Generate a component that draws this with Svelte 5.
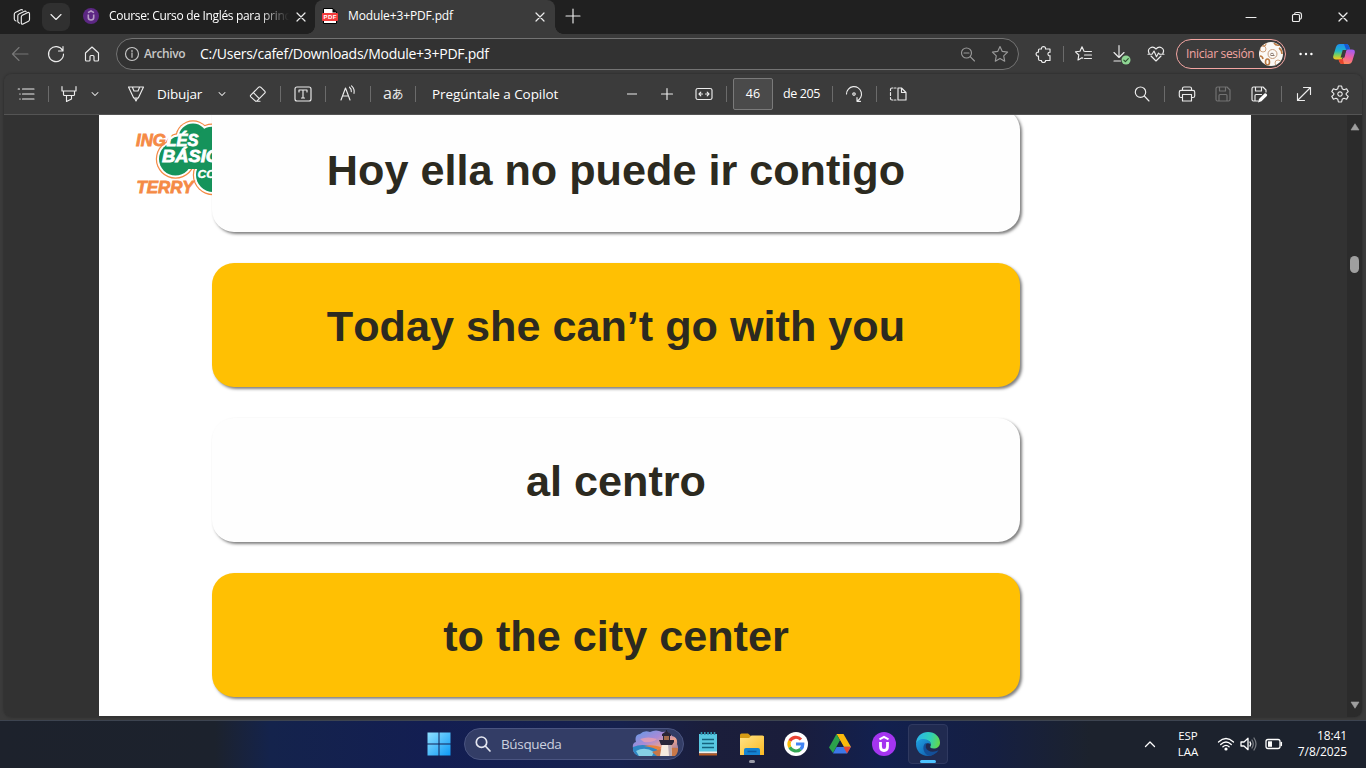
<script>
  const paths = {
    tabs: 'M9.300 10 Q9.300 8.800 10.300 8.300 L15.800 5.600 Q17.500 5 17.500 6.800 V12.500 Q17.500 13.700 16.500 14.200 L11 17 Q9.300 17.600 9.300 16Z M7.500 16.200 Q5.800 15.700 5.800 14.300 V8.800 Q5.800 7.500 7 7 L12.500 4.300 Q13.700 3.900 14 4.600 M4 14 Q2.300 13.500 2.300 12 V7.200 Q2.300 6 3.300 5.500 L8.800 2.800 Q10.100 2.300 10.500 3',
    chevron: 'M5 7.5 L10 12.5 L15 7.5',
    chevronUp: 'M5.500 12.5 L10 8 L14.500 12.5',
    close: 'M6 6 L14 14 M14 6 L6 14',
    plus: 'M10 3 V17 M3 10 H17',
    zoomIn: 'M10 4.5 V15.5 M4.5 10 H15.5',
    minus: 'M5 10 H15',
    minimize: 'M5 10.5 H15',
    restore: 'M5.5 8.500 Q5.5 7.500 6.5 7.500 H11.5 Q12.5 7.500 12.5 8.500 V13.5 Q12.5 14.5 11.5 14.5 H6.5 Q5.5 14.5 5.5 13.5Z M7.5 7.300 Q7.6 5.500 9.5 5.500 H12 Q14.5 5.500 14.5 8 V10 Q14.5 12 13 12.2',
    back: 'M18 10 H2.5 M9 3.5 L2.5 10 L9 16.5',
    refresh: 'M16.6 6.5 A7.5 7.5 0 1 0 17.5 10 M17 2.5 V7 H12.5',
    home: 'M3.5 9 L10 3 L16.5 9 V16 Q16.5 17 15.5 17 H13 Q12 17 12 16 V12.5 Q12 11.5 11 11.5 H9 Q8 11.5 8 12.5 V16 Q8 17 7 17 H4.5 Q3.5 17 3.5 16Z',
    info: 'M10 3.5 A6.5 6.5 0 1 0 10 16.5 A6.5 6.5 0 1 0 10 3.5 M10 9 V13.3 M10 6.3 V7.7',
    zoomOut: 'M8.500 4 A5 5 0 1 0 8.500 14 A5 5 0 1 0 8.500 4 M12.200 12.7 L16.500 17 M6 9 H11',
    star: 'M10 2.5 L12.3 7.4 L17.6 8.1 L13.7 11.8 L14.7 17.2 L10 14.6 L5.3 17.2 L6.3 11.8 L2.4 8.1 L7.7 7.4Z',
    puzzle: 'M5.500 5 H7.500 C6.900 1.8 12.100 1.8 11.500 5 H16 V8.3 C13.300 7.8 13.300 12.2 16 11.7 V16.5 H11.500 C12.100 19.200 6.900 19.200 7.500 16.5 H6 Q4.500 16.5 4.500 15 V12 C1.300 12.6 1.300 7.6 4.500 8.2 V6 Q4.500 5 5.500 5Z',
    favorites: 'M11.5 7.5 L10 7.3 L8 2.8 L6 7.2 L1.5 7.8 L4.8 11 L4 16 L8 13.7 L8.8 14.2 M11.5 7.5 H17.5 M10.5 11 H17.5 M10.5 14.5 H17.5',
    download: 'M8 1.5 V13.5 M3 8.5 L8 13.5 L13 8.5 M3 17 H9.5',
    heart: 'M3.2 9.5 C0.5 4.5 6.5 1 10 5 C13.5 1 19.5 4.5 16.8 9.5 M5 12 L10 17 L15 12 M2 10.2 H6 L8 7 L10.5 12.7 L12.5 9 L13.5 10.2 H18',
    list: 'M6.500 5 H18 M6.500 10 H18 M6.500 15 H18 M2.2 5 H3.5 M3.800 10 H4.200 M3.800 15 H4.200',
    highlighter: 'M3 2.500 V7 H17 V2.500 M4.500 7 V10.500 Q4.500 11.500 5.500 11.500 H14.500 Q15.500 11.500 15.500 10.500 V7 M7.5 11.5 V17.5 L12.5 15 V11.5',
    pen: 'M2.5 3 H17.5 L12.3 14 H7.7Z M6.300 3 L8 7 H12 L13.700 3 M8.5 14 L10 17 L11.5 14',
    eraser: 'M2.8 11.2 L10.7 3.2 Q11.7 2.3 12.7 3.2 L16.7 7.2 Q17.7 8.2 16.7 9.2 L8.8 17.2 H7.5 L2.8 12.8 Q2 12 2.8 11.2Z M5.4 8.7 L11.3 14.6 M7.5 17.2 H12',
    textBox: 'M4 3 H16 Q18 3 18 5 V15 Q18 17 16 17 H4 Q2 17 2 15 V5 Q2 3 4 3Z M6 8 V6 H14 V8 M10 6 V14 M8.5 14 H11.5',
    readAloud: 'M3 16 L7.500 4 L12 16 M4.500 12 H10.500 M11.500 3.2 Q13.700 5 13.300 7.7 M13.500 1.8 Q17 5 16 9.3',
    fit: 'M4 4.5 H16 Q18 4.5 18 6 V14 Q18 15.5 16 15.5 H4 Q2 15.5 2 14 V6 Q2 4.5 4 4.5Z M5 10 H8.500 M6.800 8.200 L5 10 L6.800 11.800 M11.500 10 H15 M13.200 8.200 L15 10 L13.200 11.800',
    rotate: 'M2.5 10 A7.5 7.5 0 1 1 13 17 M13 13.5 V17.3 H16.5 M10 8.8 A1.2 1.2 0 1 0 10 11.2 A1.2 1.2 0 1 0 10 8.8',
    pageView: 'M10 4 H13.5 L18 8.5 V16 H10Z M13.5 4 V8.5 H18 M8 4 H6.5 M5 4 H4 Q2.5 4 2.5 5.5 V6.5 M2.5 8.5 V11.5 M2.5 13.5 V14.5 Q2.5 16 4 16 H5 M6.5 16 H8',
    search: 'M8.5 3 A5.2 5.2 0 1 0 8.5 13.4 A5.2 5.2 0 1 0 8.5 3 M12.3 12 L17 17',
    print: 'M5.5 6 V4.5 Q5.5 3 7 3 H13 Q14.5 3 14.5 4.5 V6 M5.5 13.5 H4 Q2.3 13.5 2.3 12 V8 Q2.3 6.3 4 6.3 H16 Q17.7 6.3 17.7 8 V12 Q17.7 13.5 16 13.5 H14.5 M5.5 10.5 H14.5 V17 H5.5Z',
    save: 'M4.5 3 H14 L17 6 V15.5 Q17 17 15.5 17 H4.5 Q3 17 3 15.5 V4.5 Q3 3 4.5 3Z M6.5 3.3 V7 H12.5 V3.3 M6 17 V11.5 Q6 10.5 7 10.5 H13 Q14 10.5 14 11.5 V17',
    saveAs: 'M9 17 H4.5 Q3 17 3 15.5 V4.5 Q3 3 4.5 3 H14 L17 6 V8 M6.5 3.3 V7 H12.5 V3.3 M6 17 V11.5 Q6 10.5 7 10.5 H12.5',
    expand: 'M3.5 16.5 L16.5 3.5 M9.5 3.5 H16.5 V10.5 M3.5 9.5 V16.5 H10.5',
    gear: 'M8.4 2 H11.6 L12.2 4.7 L14 5.7 L16.6 4.8 L18.2 7.6 L16.2 9.4 V10.6 L18.2 12.4 L16.6 15.2 L14 14.3 L12.2 15.3 L11.6 18 H8.4 L7.8 15.3 L6 14.3 L3.4 15.2 L1.8 12.4 L3.8 10.6 V9.4 L1.8 7.6 L3.4 4.8 L6 5.7 L7.8 4.7Z M10 7.8 A2.2 2.2 0 1 0 10 12.2 A2.2 2.2 0 1 0 10 7.8',
  };

  const cards = [
    { text: 'Hoy ella no puede ir contigo', yellow: false },
    { text: 'Today she can’t go with you', yellow: true },
    { text: 'al centro', yellow: false },
    { text: 'to the city center', yellow: true },
  ];
</script>

{#snippet icon(name, cls = '')}
  <svg class="icon {cls}" viewBox="0 0 20 20"><path d={paths[name]} /></svg>
{/snippet}

{#snippet cloud(fill, grow)}
  <g {fill}>
    <circle cx="59" cy="20" r={14.5 + grow} />
    <circle cx="78" cy="24" r={15.3 + grow} />
    <circle cx="44" cy="28" r={9.5 + grow} />
    <circle cx="41.5" cy="41" r={16.5 + grow} />
    <circle cx="79" cy="57" r={17 + grow} />
  </g>
{/snippet}

<div class="screen">
  <header class="tabstrip">
    {@render icon('tabs', 'tabs-icon')}
    <div class="tabmenu">{@render icon('chevron')}</div>
    <div class="tab idle">
      <svg class="fav" viewBox="0 0 16 16"><circle cx="8" cy="8" r="8" fill="#5c2783" /><path d="M5.3 6.5 V9.5 Q5.3 12 8 12 Q10.7 12 10.7 9.5 V6.5 M5 4.6 L8 3 L11 4.6" fill="none" stroke="#b59cc6" stroke-width="1.6" /></svg>
      <span class="tabtitle fade">Course: Curso de Inglés para princ</span>
      {@render icon('close')}
    </div>
    <div class="tab active">
      <svg class="fav" viewBox="0 0 16 16"><path d="M1.5 .5 H11 L14.5 4 V15.5 H1.5Z" fill="#fff" stroke="#000" /><path d="M10.5 0 L15 4.5 H10.5Z" fill="#000" /><rect y="5" width="16" height="8" rx="1" fill="#f33b3b" /><text x="1.5" y="11.2" textLength="13" font-size="6" font-weight="700" fill="#fff">PDF</text></svg>
      <span class="tabtitle">Module+3+PDF.pdf</span>
      {@render icon('close')}
    </div>
    {@render icon('plus', 'newtab')}
    <div class="window-controls">
      {@render icon('minimize')}
      {@render icon('restore')}
      {@render icon('close', 'win-close')}
    </div>
  </header>

  <nav class="address-row">
    {@render icon('back', 'dim')}
    {@render icon('refresh')}
    {@render icon('home')}
    <div class="omnibox">
      {@render icon('info', 'soft')}
      <span class="scheme">Archivo</span>
      <span class="url">C:/Users/cafef/Downloads/Module+3+PDF.pdf</span>
      {@render icon('zoomOut', 'grey')}
      {@render icon('star', 'grey')}
    </div>
    <div class="extras">
      {@render icon('puzzle')}
      <i class="sep"></i>
      {@render icon('favorites')}
      <svg class="icon download" viewBox="0 0 20 20"><path d={paths.download} /><circle cx="15" cy="16" r="4.5" class="badge" /><path d="M12.800 16.1 L14.4 17.7 L17.3 14.7" class="check" /></svg>
      {@render icon('heart')}
    </div>
    <div class="signin">
      <span>Iniciar sesión</span>
      <svg class="avatar" viewBox="0 0 24 24">
        <clipPath id="face"><circle cx="12" cy="12" r="12" /></clipPath>
        <g clip-path="url(#face)" fill="none" stroke="#b9773f">
          <rect width="24" height="24" fill="#fbf8f5" stroke="none" />
          <circle cx="13.5" cy="12" r="4.5" stroke="#c39a7b" />
          <path d="M11 12.5 L13 11 L15 12.5 M11.5 13.5 H15.5" stroke="#8b7a70" />
          <circle cx="4" cy="7" r="3" stroke="#cfa27e" /><circle cx="5" cy="2" r="2" />
          <ellipse cx="8.5" cy="20" rx="2" ry="3" stroke-width="1.6" />
          <circle cx="19" cy="21" r="3" stroke="#cfa27e" /><path d="M20 6 Q23 8 23 12 M15 1 Q17 4 21 3 M1 14 Q3.5 14 4 17" stroke-width="1.6" />
        </g>
      </svg>
    </div>
    <svg class="icon dots" viewBox="0 0 20 20"><g class="fillw"><circle cx="4.6" cy="10" r="1.2" /><circle cx="10" cy="10" r="1.2" /><circle cx="15.4" cy="10" r="1.2" /></g></svg>
    <svg class="copilot" viewBox="0 0 22 20">
      <defs>
        <linearGradient id="cpA" x1="0" y1="0" x2="0" y2="1"><stop offset="0" stop-color="#1f8fef" /><stop offset=".45" stop-color="#1fb5c8" /><stop offset=".7" stop-color="#7ccf5b" /><stop offset="1" stop-color="#ffc61a" /></linearGradient>
        <linearGradient id="cpB" x1=".6" y1="0" x2=".3" y2="1"><stop offset="0" stop-color="#a45cf0" /><stop offset=".5" stop-color="#f0609e" /><stop offset="1" stop-color="#ff9152" /></linearGradient>
      </defs>
      <path d="M7 0 H13 Q15.5 0 16.3 3 L17 5.5 H14 Q12 5.5 11.3 8 L9.5 14 Q8.8 15.5 7 15.5 H3 Q-.7 15.5 .4 11.5 L3 3 Q4 0 7 0Z" fill="url(#cpA)" />
      <path d="M11 0 H13 Q15.5 0 16.3 3 L17 5.5 H13 Q12 3 11 0Z" fill="#1559d6" />
      <path d="M15 5.5 H19 Q22.7 5.5 21.6 9.5 L19.3 17 Q18.4 20 15.4 20 H9.5 Q7 20 6.2 17.5 L5.6 15.5 H8 Q10 15.5 10.6 13.5 L12.7 7.5 Q13.4 5.5 15 5.5Z" fill="url(#cpB)" />
      <path d="M9.700 6 H13.300 L11.500 13.500 H7.600Z" fill="#3b3b3b" />
      <path d="M5.6 15.5 H8 Q9 15.5 9.8 14.8 L11 20 H9.5 Q7 20 6.2 17.5Z" fill="#e8452c" />
    </svg>
  </nav>

  <main class="panel">
    <div class="toolbar">
      {@render icon('list')}
      <i class="sep"></i>
      {@render icon('highlighter', 'near')}
      {@render icon('chevron', 'mini')}
      {@render icon('pen', 'draw')}
      <span class="label w-draw">Dibujar</span>
      {@render icon('chevron', 'mini')}
      {@render icon('eraser', 'eraser')}
      <i class="sep"></i>
      {@render icon('textBox')}
      <i class="sep"></i>
      {@render icon('readAloud')}
      <i class="sep"></i>
      <span class="translate">a<b>あ</b></span>
      <i class="sep"></i>
      <span class="label w-copilot">Pregúntale a Copilot</span>
      {@render icon('minus', 'zoomer')}
      {@render icon('zoomIn', 'plus15')}
      {@render icon('fit', 'plus17')}
      <i class="sep"></i>
      <span class="pagebox">46</span>
      <span class="label w-total">de 205</span>
      <i class="sep"></i>
      {@render icon('rotate', 'tight')}
      <i class="sep"></i>
      {@render icon('pageView', 'tight')}
      <div class="tools-right">
        {@render icon('search')}
        <i class="sep"></i>
        {@render icon('print')}
        {@render icon('save', 'faded wide')}
        <svg class="icon wide" viewBox="0 0 20 20"><path d={paths.saveAs} /><path d="M9 18.5 L10 15 L15.5 9.5 Q16.5 8.8 17.6 9.9 Q18.7 11 17.8 12 L12.5 17.3Z" class="fillw" /></svg>
        <i class="sep"></i>
        {@render icon('expand')}
        {@render icon('gear', 'wide')}
      </div>
    </div>

    <div class="viewer">
      <article class="page">
        <svg class="logo" viewBox="0 0 80 82">
          {@render cloud('#f58a45', 3.2)}
          {@render cloud('#fff', 2)}
          {@render cloud('#15935b', 0)}
          <rect x="46" y="24" width="34" height="27" fill="#15935b" />
          <g class="logotext">
            <text x="2" y="28" textLength="30" lengthAdjust="spacingAndGlyphs" fill="#f58a45" stroke="#f58a45">ING</text>
            <text x="32.500" y="28" textLength="32" lengthAdjust="spacingAndGlyphs" fill="#fff" stroke="#fff">LÉS</text>
            <text x="28" y="44.300" textLength="57" lengthAdjust="spacingAndGlyphs" fill="#fff" stroke="#fff">BÁSIC</text>
            <text x="63.500" y="60" textLength="18" lengthAdjust="spacingAndGlyphs" class="small" fill="#fff" stroke="#fff">CO</text>
            <text x="2.500" y="75" textLength="57" lengthAdjust="spacingAndGlyphs" fill="#f58a45" stroke="#f58a45">TERRY</text>
          </g>
        </svg>
        <div class="cards">
          {#each cards as card}
            <div class="card" class:yellow={card.yellow}>{card.text}</div>
          {/each}
        </div>
      </article>
      <aside class="scrollbar">
        <svg viewBox="0 0 10 8"><path d="M5 .7 L9 7 H1Z" /></svg>
        <span class="thumb"></span>
        <svg viewBox="0 0 10 8"><path d="M1 1 H9 L5 7.300Z" /></svg>
      </aside>
    </div>
  </main>

  <footer class="taskbar">
    <div class="tile">
      <svg width="24" height="24" viewBox="0 0 24 24"><defs><linearGradient id="win" x1="0" y1="0" x2="1" y2="1"><stop offset="0" stop-color="#8fe0ff" /><stop offset="1" stop-color="#0d99f5" /></linearGradient></defs><path d="M.5 .5 H11.500 V11.500 H.5Z M12.500 .5 H23.500 V11.500 H12.500Z M.5 12.500 H11.500 V23.500 H.5Z M12.500 12.500 H23.500 V23.500 H12.500Z" fill="url(#win)" /></svg>
    </div>
    <div class="searchbox">
      {@render icon('search', 'glass')}
      <span>Búsqueda</span>
      <svg class="lighthouse" viewBox="0 0 47 27">
        <defs><linearGradient id="sky" x1="0" y1="0" x2="1" y2="1"><stop offset="0" stop-color="#5a9be8" /><stop offset=".4" stop-color="#a98ad6" /><stop offset=".65" stop-color="#f0a48c" /><stop offset="1" stop-color="#6f6bb0" /></linearGradient></defs>
        <path d="M1 18 Q0 13 4 12 Q2 5 8 4 Q12 0 18 2 Q24 -1 30 2 Q37 1 40 6 Q46 7 45 14 Q48 20 43 25 H6 Q1 24 1 18Z" fill="url(#sky)" />
        <path d="M8 9 Q16 6 25 9 Q20 13 12 12Z" fill="#f3a0a8" opacity=".7" />
        <path d="M1 17 Q12 12 25 19 L30 26 H6 Q0 23 1 17Z" fill="#2e86c4" /><path d="M4 21 Q13 16 22 22 L20 26 H7Z" fill="#86cfe4" />
        <path d="M12 16 Q20 14 29 17 L28 21 Q21 17 12 16Z" fill="#e8823e" /><path d="M20 22 Q34 17 46 18 Q46 24 43 26 H25Z" fill="#c97848" />
        <path d="M30 14 H39 L40 26 H28Z" fill="#f5eadf" /><path d="M36 14 H39 L40 26 H37Z" fill="#b9aab4" />
        <path d="M27 10 H42 V12 L40 15 H29Z M30 4 L34.500 1 L39 4 V6 H30Z M31 6 H32 V10 H31Z M37 6 H38 V10 H37Z M34 0 H35 V2 H34Z" fill="#292538" /><rect x="32" y="6" width="5" height="4" fill="#a06a4c" />
      </svg>
    </div>
    <div class="tile">
      <svg width="20" height="24" viewBox="0 0 20 24"><rect x="1" y="2" width="18" height="18" fill="#58c8e2" /><path d="M3.500 0 V3 M6.800 0 V3 M10 0 V3 M13.200 0 V3 M16.500 0 V3" stroke="#3198b4" stroke-width="1.600" /><path d="M4 7.500 H16 M4 11.500 H16 M4 15.500 H16" stroke="#14637e" stroke-width="1.700" /><rect x="1" y="19.500" width="18" height="2" fill="#f2eee9" /><rect x="1" y="21.500" width="18" height="2" fill="#b65a22" /></svg>
    </div>
    <div class="tile">
      <svg width="24" height="24" viewBox="0 0 24 24"><defs><linearGradient id="fold" x1="0" y1="0" x2="1" y2="1"><stop offset="0" stop-color="#ffe488" /><stop offset="1" stop-color="#fcb922" /></linearGradient></defs><path d="M0 3 Q0 1.500 1.500 1.500 H8 L11 4 H24 V10 H0Z" fill="#d59b14" /><path d="M0 6 H9 L11.500 3.500 H22.500 Q24 3.500 24 5 V23 H0Z" fill="url(#fold)" /><path d="M4 23 V18 Q4 16 6 16 H18 Q20 16 20 18 V23Z" fill="#1583d1" /><path d="M7.500 19.500 H16.500" stroke="#0c5ba2" stroke-width="1.600" /></svg>
      <i class="running"></i>
    </div>
    <div class="tile">
      <svg width="24" height="24" viewBox="0 0 24 24"><circle cx="12" cy="12" r="12" fill="#fff" /><g fill="none" stroke-width="3.200"><path d="M17 7.500 A7 7 0 0 0 5.700 9" stroke="#ea4335" /><path d="M5.700 9 A7 7 0 0 0 5.800 15.300" stroke="#fbbc04" /><path d="M5.800 15.300 A7 7 0 0 0 16.600 17.200" stroke="#34a853" /><path d="M16.600 17.200 Q19 15 18.800 12 H12" stroke="#4285f4" /></g></svg>
    </div>
    <div class="tile">
      <svg width="24" height="24" viewBox="0 0 24 24"><path d="M8.500 2 H15.500 L23 15 H16Z" fill="#fbb90b" /><path d="M8.500 2 L12 8.500 L5 21 L1 15.500Z" fill="#2ba24c" /><path d="M5 21.500 L8.700 14.800 H23 L19 21.500Z" fill="#3c78e8" /><path d="M19 21.500 L15.300 14.800 H23Z" fill="#e54335" /><path d="M12 8.500 L15.500 15 H8.500Z" fill="#181f40" /></svg>
    </div>
    <div class="tile">
      <svg width="24" height="24" viewBox="0 0 24 24"><circle cx="12" cy="12" r="12" fill="#a435f0" /><path d="M8.500 10 V14.500 Q8.500 18.500 12 18.500 Q15.500 18.500 15.500 14.500 V10" fill="none" stroke="#fff" stroke-width="2.800" /><path d="M7.500 7.300 L12 4.800 L16.500 7.300" fill="none" stroke="#fff" stroke-width="2" /></svg>
    </div>
    <div class="tile current">
      <svg width="24" height="24" viewBox="0 0 24 24">
        <defs><linearGradient id="eg1" x1="0" y1=".3" x2="1" y2=".5"><stop offset="0" stop-color="#2bb3ee" /><stop offset=".6" stop-color="#2fd0b5" /><stop offset="1" stop-color="#62d94c" /></linearGradient><linearGradient id="eg2" x1="0" y1="0" x2="1" y2="1"><stop offset="0" stop-color="#1fa0e2" /><stop offset="1" stop-color="#0f55a5" /></linearGradient></defs>
        <path d="M0 12 C0 4 6 0 12 0 C19 0 24 5 24 10.500 C24 14.500 21 16.500 17.700 16.500 C15 16.500 14 15.500 14.300 14.500 C15.600 13 15 9 10 8 C5 7.500 1 9 0 12Z" fill="url(#eg1)" />
        <path d="M0 12 C1 8 5.500 6.500 9 7.300 C13.500 8 15 11 14.800 12.500 C12 9.500 8 12 8.500 16 C9 20 14 22.500 20 20 C18 22.500 15 24 12 24 C5 24 0 19 0 12Z" fill="url(#eg2)" />
        <path d="M9 11.500 C5.500 15 8 23 13.500 23.900 C17 23.500 20.500 21.500 22.600 18.300 C17 21 11 19.500 9.800 15.500 Q9.300 13 11 11Z" fill="#134f98" />
      </svg>
      <i class="running"></i>
    </div>
    <div class="tray">
      {@render icon('chevronUp', 'up')}
      <div class="lang"><span>ESP</span><span>LAA</span></div>
      <svg class="icon wifi" viewBox="0 0 20 20"><path d="M2.500 8 Q10 1 17.500 8 M4.700 10.500 Q10 5.500 15.300 10.500 M6.900 12.800 Q10 10 13.100 12.800" /><circle cx="10" cy="15" r="1.600" class="fillw" /></svg>
      <svg class="icon vol" viewBox="0 0 20 20"><path d="M3 8 H6 L10 4.300 V15.700 L6 12 H3Z M12 8 Q13.500 10 12 12" /><path d="M14 6 Q16.500 10 14 14 M16 4 Q20 10 16 16" stroke-opacity=".4" /></svg>
      <svg class="icon batt" viewBox="0 0 20 20"><path d="M4 5.500 H14 Q16 5.500 16 7.500 V12.500 Q16 14.500 14 14.500 H4 Q2 14.500 2 12.500 V7.500 Q2 5.500 4 5.500Z" /><path d="M17.300 8.500 V11.500" stroke-width="1.500" /><rect x="4" y="7.300" width="4" height="5.500" class="fillw" /></svg>
      <div class="clock"><span>18:41</span><span>7/8/2025</span></div>
    </div>
  </footer>
</div>

<style>
  :global(body) { margin: 0; overflow: hidden; }
  .screen {
    width: 1366px; height: 768px; display: flex; flex-direction: column;
    background: #3b3b3b; color: #fff; overflow: hidden;
    font: 12px/16px "Open Sans", "Noto Sans", sans-serif;
  }
  svg { display: block; flex: none; }
  span { white-space: nowrap; }
  .icon { width: 20px; height: 20px; fill: none; stroke: #ececec; stroke-width: 1.15; stroke-linejoin: round; stroke-linecap: round; }
  .sep { width: 1px; height: 16px; background: #6b6b6b; flex: none; }

  .tabstrip { height: 34px; flex: none; display: flex; align-items: center; background: #202020; }
  .tabs-icon { margin: 0 10px 0 12px; }
  .tabmenu { width: 28px; height: 28px; border-radius: 8px; background: #303030; display: grid; place-items: center; }
  .tab { box-sizing: border-box; display: flex; align-items: center; height: 34px; padding-bottom: 2px; }
  .idle { width: 245px; padding-left: 13px; }
  .active {
    width: 240px; padding-left: 7px; background: #3b3b3b; border-radius: 8px 8px 0 0; position: relative;
  }
  .active::before, .active::after { content: ""; position: absolute; bottom: 0; width: 8px; height: 8px; }
  .active::before { left: -8px; background: radial-gradient(circle at 0 0, transparent 7.5px, #3b3b3b 8px); }
  .active::after { right: -8px; background: radial-gradient(circle at 100% 0, transparent 7.5px, #3b3b3b 8px); }
  .fav { width: 16px; height: 16px; font-family: "Liberation Sans", sans-serif; }
  .tabtitle { margin-left: 10px; width: 181px; overflow: hidden; letter-spacing: -.13px; }
  .idle .tabtitle { letter-spacing: -.32px; }
  .tab .icon { margin: 2px 0 0 1px; stroke-width: 1.2; }
  .fade { mask-image: linear-gradient(90deg, #000 150px, transparent 180px); }
  .newtab { margin-left: 8px; margin-bottom: 2px; }
  .window-controls { margin-left: auto; display: flex; gap: 26px; padding-right: 12px; }
  .win-close { stroke-width: 1.3; width: 22px; margin-left: -1px; }

  .address-row { height: 40px; flex: none; display: flex; align-items: center; padding-left: 10px; gap: 16px; }
  .dim { stroke: #777; }
  .soft { stroke: #c8c8c8; }
  .grey { stroke: #999; }
  .omnibox {
    box-sizing: border-box; width: 903px; height: 32px; margin-left: -2px; padding: 0 8px 0 5px;
    border: 1px solid #737373; border-radius: 16px; background: #323232; display: flex; align-items: center;
  }
  .scheme { margin-left: 2px; width: 56px; font-weight: 600; color: #c8c8c8; letter-spacing: -.35px; }
  .url { flex: 1; font-size: 14px; letter-spacing: -.27px; }
  .omnibox .icon:last-child { margin-left: 12px; }
  .extras { display: flex; align-items: center; gap: 16px; margin-left: -1px; }
  .extras .sep { margin: 0 -6px 0 -7px; }
  .extras .download { margin: 0 -1px 0 1px; overflow: visible; }
  .badge { fill: #8fd694; stroke: none; }
  .check { stroke: #2c4f2e; }
  .signin {
    box-sizing: border-box; width: 110px; height: 30px; border: 1px solid #f3a5a2; border-radius: 15px;
    display: flex; align-items: center; justify-content: space-between; padding: 0 2px 0 9px; color: #f3a5a2; margin-left: -6px;
  }
  .signin span { letter-spacing: -.33px; }
  .avatar { width: 24px; height: 24px; }
  .dots { margin-left: -6px; }
  .copilot { width: 22px; height: 20px; margin-left: 1px; }

  .panel { flex: none; width: 1358px; height: 643px; margin-left: 4px; border-radius: 8px; overflow: hidden; display: flex; flex-direction: column; box-shadow: 0 0 3px rgba(0, 0, 0, .35); }
  .toolbar {
    box-sizing: border-box; height: 41px; flex: none; display: flex; align-items: center; gap: 12px;
    padding: 0 12px; background: #3b3b3b; border-bottom: 1px solid #545454;
  }
  .near { margin: 0 -2px; }
  .tight { margin-left: -1px; }
  .mini { width: 12px; height: 12px; stroke-width: 1.7; }
  .draw { margin-left: 13px; }
  .eraser { margin-left: 8px; }
  .label { font-size: 13.5px; }
  .w-draw { width: 47px; letter-spacing: -.15px; margin-left: -1px; }
  .w-copilot { width: 130px; margin-left: 4px; letter-spacing: -.06px; }
  .w-total { width: 37px; font-size: 12.5px; letter-spacing: -.4px; margin-left: -2px; }
  .translate { width: 20px; font: 16px/18px "Open Sans", sans-serif; display: flex; align-items: baseline; letter-spacing: -.5px; color: #ececec; margin-top: -2px; }
  .translate b { font: 12px/18px "Noto Sans CJK JP", sans-serif; }
  .zoomer { margin-left: 48px; stroke-linecap: butt; }
  .plus15 { margin-left: 3px; }
  .plus17 { margin-left: 5px; }
  .pagebox {
    box-sizing: border-box; width: 40px; height: 32px; margin-left: -6px; border: 1px solid #7a7a7a; border-radius: 2px;
    background: #4a4a4a; font-size: 12.5px; line-height: 30px; text-align: center;
  }
  .tools-right { margin-left: auto; display: flex; align-items: center; gap: 12px; }
  .wide { margin-left: 4px; }
  .faded { stroke: #737373; }

  .viewer { flex: 1; min-height: 0; display: flex; background: #323232; }
  .page { margin-left: 95px; width: 1152px; height: 601px; background: #fff; display: flex; overflow: hidden; }
  .logo { width: 80px; height: 82px; margin: 3px 0 0 35px; }
  .logotext { font: italic 700 16.800px "Liberation Sans", sans-serif; stroke-width: .8px; }
  .small { font-size: 11px; stroke-width: .4px; }
  .cards { margin: -7px 0 0 -2px; display: flex; flex-direction: column; gap: 31px; z-index: 1; }
  .card {
    box-sizing: border-box; width: 808px; height: 124px; padding-top: 1px; border-radius: 22px; background: #fefefe; color: #2c2a20;
    box-shadow: 2px 2px 3px rgba(0, 0, 0, .5); text-align: center;
    font: 700 43.200px/124px "Liberation Sans", Arial, sans-serif; font-kerning: none;
  }
  .card:first-child { border-top-left-radius: 0; padding-top: 0; }
  .yellow { background: #ffc003; }
  .scrollbar { margin-left: auto; width: 15px; background: #2b2b2b; display: flex; flex-direction: column; align-items: center; justify-content: space-between; padding: 8px 0; box-sizing: border-box; }
  .scrollbar svg { width: 10px; height: 8px; fill: #9f9f9f; stroke: #9f9f9f; stroke-width: .6; stroke-linejoin: round; }
  .thumb { width: 9px; height: 17px; border-radius: 5px; background: #9f9f9f; margin-bottom: 303px; }

  .taskbar {
    box-sizing: border-box; height: 48px; margin-top: 3px; flex: none; display: flex; align-items: center; gap: 4px;
    padding: 0 0 2px 419px; border-top: 1px solid #3d4450;
    background: linear-gradient(90deg, #1d222c 0, #1c222d 215px, #14234c 270px, #131e52 430px, #16214e 620px, #1b1e3b 710px, #1a1d3b 790px, #12204f 880px, #151f42 990px, #1c222d 1090px, #1c222d 100%);
  }
  .tile { width: 40px; height: 40px; box-sizing: border-box; border-radius: 4px; display: grid; place-items: center; position: relative; }
  .current { background: #202a50; border: 1px solid #2f3960; }
  .running { position: absolute; bottom: 1px; width: 6px; height: 3px; border-radius: 2px; background: #9a9ba8; }
  .current .running { width: 16px; background: #4cc2ff; bottom: 0; }
  .searchbox {
    box-sizing: border-box; width: 220px; height: 32px; margin-left: 1px; border: 1px solid #4a5480; border-radius: 16px;
    background: #333d66; display: flex; align-items: center; padding: 0 4px 0 8px; color: #ccd0df; font-size: 13.500px;
  }
  .searchbox span { margin-left: 8px; flex: 1; letter-spacing: -.35px; }
  .glass { stroke: #e4e6f0; stroke-width: 1.700; }
  .lighthouse { width: 47px; height: 27px; }
  .tray { margin-left: auto; display: flex; align-items: center; padding-right: 19px; }
  .tray .icon { stroke: #fff; stroke-width: 1.300; }
  .icon .fillw, .tray .icon .fillw { fill: #fff; stroke: none; }
  .up { margin-right: 17px; }
  .lang { display: flex; flex-direction: column; align-items: center; width: 22px; margin: 1px 17px 0 0; letter-spacing: -.05px; font-size: 11.500px; }
  .vol { margin-left: 2px; }
  .batt { margin-left: 6px; }
  .clock { display: flex; flex-direction: column; align-items: flex-end; width: 63px; letter-spacing: -.1px; font-size: 12px; }
</style>
